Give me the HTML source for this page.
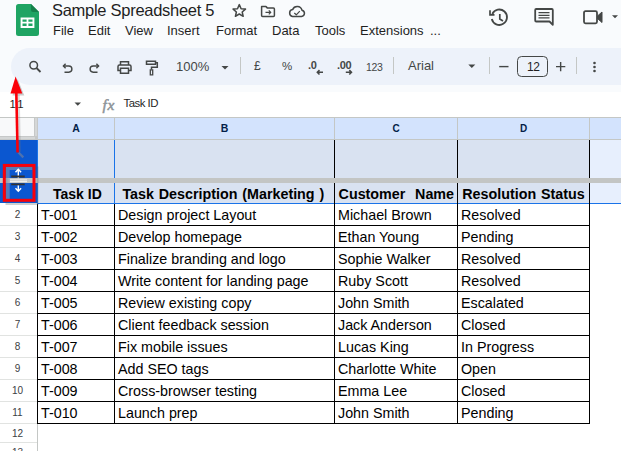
<!DOCTYPE html>
<html><head><meta charset="utf-8">
<style>
*{box-sizing:border-box;margin:0;padding:0}
html,body{width:621px;height:451px;overflow:hidden;background:#f9fbfd;font-family:"Liberation Sans",sans-serif;}
body{position:relative}
.a{position:absolute}
.title{left:52px;top:-1.4px;font-size:16.5px;letter-spacing:-0.28px;color:#1f1f1f;line-height:22px;white-space:nowrap}
.menu{top:23px;font-size:13px;color:#1f1f1f;line-height:16px;white-space:nowrap}
.toolbar{left:11.4px;top:48px;width:640px;height:37px;border-radius:18.5px;background:#edf2fa}
.tb{font-size:13px;color:#444746;line-height:16px;white-space:nowrap}
.sep{top:57px;width:1px;height:17px;background:#c4c7c5}
.white{left:0;top:92px;width:621px;height:359px;background:#fff}
.chl{top:118px;height:21px;color:#041e49;font-weight:bold;font-size:9.5px;text-align:center;line-height:21px}
.rn{left:0;width:35px;color:#3c4043;font-size:10px;text-align:center}
.t{font-size:14.3px;color:#000;line-height:16px;white-space:nowrap}
.hd{font-weight:bold;text-align:center;word-spacing:0.9px}
.ln{background:#000}
</style></head><body>
<!-- header -->
<svg class="a" style="left:16px;top:4px" width="23" height="32" viewBox="0 0 23 32">
<path d="M2.500 0H15L23 8V29.500A2.500 2.500 0 0 1 20.500 32H2.500A2.500 2.500 0 0 1 0 29.500V2.500A2.500 2.500 0 0 1 2.500 0Z" fill="#1fa463"/>
<path d="M15 0L23 8H17A2 2 0 0 1 15 6Z" fill="#16804b"/>
<path d="M4.600 13.500H18.400V23.900H4.600ZM6.500 15.400V17.800H10.600V15.400ZM12.400 15.400V17.800H16.500V15.400ZM6.500 19.600V22H10.600V19.600ZM12.400 19.600V22H16.500V19.600Z" fill="#fff" fill-rule="evenodd"/>
</svg>
<div class="a title">Sample Spreadsheet 5</div>

<div class="a menu" style="left:53px">File</div>
<div class="a menu" style="left:88px">Edit</div>
<div class="a menu" style="left:125px">View</div>
<div class="a menu" style="left:167px">Insert</div>
<div class="a menu" style="left:216px">Format</div>
<div class="a menu" style="left:272px">Data</div>
<div class="a menu" style="left:315px">Tools</div>
<div class="a menu" style="left:360px">Extensions</div>
<div class="a menu" style="left:430px">...</div>
<svg class="a" style="left:230px;top:2px" width="90" height="20" viewBox="0 0 90 20" fill="none" stroke="#444746" stroke-width="1.500" stroke-linejoin="round">
<path transform="translate(0.3,-0.6)" d="M9 3.200L10.800 7.300L15.200 7.700L11.900 10.600L12.900 14.900L9 12.600L5.100 14.900L6.100 10.600L2.800 7.700L7.200 7.300Z"/>
<path d="M31.600 4.600H36L37.500 6.100H43.400Q44.400 6.100 44.400 7.100V13.600Q44.400 14.600 43.400 14.600H32.600Q31.600 14.600 31.600 13.600Z"/>
<path d="M35.500 10.300H40.500M38.800 8.300L40.800 10.300L38.800 12.300" stroke-width="1.200"/>
<path d="M62.500 14.500H71.500A3.200 3.200 0 0 0 72 8.200A5 5 0 0 0 62.600 7.600A3.500 3.500 0 0 0 62.500 14.500Z"/>
<path d="M64.300 11L66.300 12.800L69.800 9.200" stroke-width="1.200"/>
</svg>
<svg class="a" style="left:485px;top:4px" width="136" height="26" viewBox="0 0 136 26" fill="none" stroke="#444746" stroke-width="1.800">
<g transform="translate(0.8,1.5)"><path d="M6.500 8.500A7.700 7.700 0 1 1 6 13.500"/>
<path d="M4.200 4.800V9.300H8.700" stroke-width="1.700"/>
<path d="M14 8.500V13.500L17.200 15.500" stroke-width="1.700"/></g>
<path d="M51.200 5H66.800Q67.800 5 67.800 6V20.800L64.500 17.500H51.200Q50.200 17.500 50.200 16.500V6Q50.200 5 51.200 5Z" stroke-linejoin="round"/>
<path d="M53.500 8.700H64.500M53.500 11.300H64.500M53.500 13.900H64.500" stroke-width="1.300"/>
<path d="M100.500 7.200H110.500Q112 7.200 112 8.700V17.800Q112 19.300 110.500 19.300H100.500Q99 19.300 99 17.800V8.700Q99 7.200 100.500 7.200Z"/>
<path d="M112.500 12L117 8V18.500L112.500 14.500Z" fill="#444746" stroke-width="1"/>
<path d="M127 11.300H133L130 14.300Z" fill="#444746" stroke="none"/>
</svg>
<div class="a toolbar"></div>
<svg class="a" style="left:12px;top:48px" width="609" height="37" viewBox="0 0 609 37" fill="none" stroke="#444746" stroke-width="1.500">
<!-- search -->
<circle cx="21.700" cy="17.200" r="3.800"/><path d="M24.500 20L28.500 24" stroke-width="1.800"/>
<!-- undo -->
<path d="M51.500 18H56.800A2.900 2.900 0 0 1 56.800 24.200H52.500" stroke-width="1.400"/><path d="M53.600 15.800L51.400 18L53.600 20.200" stroke-width="1.400"/>
<!-- redo -->
<path d="M86.500 18H81.200A2.900 2.900 0 0 0 81.200 24.200H85.500" stroke-width="1.400"/><path d="M84.400 15.800L86.600 18L84.400 20.200" stroke-width="1.400"/>
<!-- print -->
<path d="M108.500 17V13.800H116.500V17"/><path d="M108.500 22.500H106V18.500Q106 17 107.500 17H117.500Q119 17 119 18.500V22.500H116.500"/><path d="M108.500 20.300H116.500V25.300H108.500Z"/>
<!-- paint -->
<g transform="translate(-1,0)"><path d="M135.500 13.200H144.500V16.300H135.500Z"/><path d="M144.500 14.700H146.300V19.200H140.500V21.500"/><path d="M139.300 21.800H141.700V26.800H139.300Z" stroke-width="1.300"/></g>
<!-- caret -->
<path d="M209.500 18H216.500L213 21.500Z" fill="#444746" stroke="none"/>
<!-- dec arrows -->
<path d="M305.300 24.300H311M307.500 22.100L305.300 24.300L307.500 26.500" stroke-width="1.500"/>
<path d="M333.800 24.300H339.500M337.300 22.100L339.500 24.300L337.300 26.500" stroke-width="1.500"/>
<!-- font caret -->
<path d="M456.300 16.500H463.300L459.800 20Z" fill="#444746" stroke="none"/>
<!-- minus plus -->
<path d="M487.200 18.600H496.500" stroke-width="1.400"/>
<path d="M544 18.600H553.300M548.650 14V23.300" stroke-width="1.400"/>
<!-- size box -->
<rect x="505.500" y="8.500" width="30" height="20" rx="4" stroke="#444746" stroke-width="1"/>
<!-- dots -->
<g fill="#444746" stroke="none"><circle cx="582.500" cy="15" r="1.300"/><circle cx="582.500" cy="19" r="1.300"/><circle cx="582.500" cy="23" r="1.300"/></g>
</svg>
<div class="a sep" style="left:240px"></div>
<div class="a sep" style="left:393px"></div>
<div class="a sep" style="left:489px"></div>
<div class="a sep" style="left:576px"></div>
<div class="a tb" style="left:176px;top:59px">100%</div>
<div class="a tb" style="left:254px;top:58px;font-size:12px">£</div>
<div class="a tb" style="left:282px;top:58px;font-size:11.500px">%</div>
<div class="a tb" style="left:308px;top:57px;font-size:11px;font-weight:bold;letter-spacing:-0.300px">.0</div>
<div class="a tb" style="left:337px;top:57px;font-size:11px;font-weight:bold;letter-spacing:-0.300px">.00</div>
<div class="a tb" style="left:366px;top:59px;font-size:10.500px;letter-spacing:-0.300px">123</div>
<div class="a tb" style="left:408px;top:58px">Arial</div>
<div class="a tb" style="left:527px;top:59px;color:#1f1f1f;font-size:12px;letter-spacing:-0.500px">12</div>
<div class="a white"></div>
<div class="a" style="left:9.6px;top:97px;font-size:11.4px;letter-spacing:-0.9px;color:#1f1f1f;line-height:14px">1:1</div>
<svg class="a" style="left:74px;top:102px" width="8" height="5"><path d="M0.500 0.500H7L3.750 3.800Z" fill="#444746"/></svg>
<div class="a" style="left:102.5px;top:95.5px;font-size:15.5px;font-style:italic;color:#8d9398;-webkit-text-stroke:0.5px #8d9398;font-family:'Liberation Serif',serif;line-height:18px;letter-spacing:0.6px">fx</div>
<div class="a" style="left:123.500px;top:96px;font-size:11.4px;letter-spacing:-0.5px;color:#1f1f1f;line-height:14px">Task ID</div>
<div class="a" style="left:0;top:117px;width:621px;height:1px;background:#c4c7c5"></div>
<div class="a" style="left:0;top:118px;width:38px;height:22px;background:#f8f9fa"></div>
<div class="a" style="left:34px;top:118px;width:4px;height:22px;background:#c6c8c8"></div>
<div class="a" style="left:35px;top:118px;width:2px;height:18px;background:#d5d7d7"></div>
<div class="a" style="left:0;top:136px;width:38px;height:4px;background:#c6c8c8"></div>
<div class="a" style="left:0;top:137px;width:35px;height:2px;background:#d5d7d7"></div>
<div class="a" style="left:38px;top:118px;width:583px;height:21px;background:#d3e3fd"></div>
<div class="a" style="left:38px;top:139px;width:583px;height:1px;background:#c4c7c5"></div>
<div class="a" style="left:114px;top:118px;width:1px;height:22px;background:#c4c7c5"></div>
<div class="a" style="left:334px;top:118px;width:1px;height:22px;background:#c4c7c5"></div>
<div class="a" style="left:457px;top:118px;width:1px;height:22px;background:#c4c7c5"></div>
<div class="a" style="left:589px;top:118px;width:1px;height:22px;background:#c4c7c5"></div>
<div class="a chl" style="left:38px;width:76px;font-size:10.5px">A</div>
<div class="a chl" style="left:115px;width:219px;font-size:10.5px">B</div>
<div class="a chl" style="left:335px;width:122px;font-size:10px">C</div>
<div class="a chl" style="left:458px;width:131px;font-size:10px">D</div>
<div class="a" style="left:0;top:140px;width:37px;height:63px;background:#0b57d0"></div>
<div class="a" style="left:38px;top:140px;width:552px;height:63px;background:#d9e2f1"></div>
<div class="a" style="left:590px;top:140px;width:31px;height:63px;background:#e7effd"></div>
<div class="a" style="left:37px;top:203px;width:584px;height:1px;background:#1a73e8"></div>
<div class="a" style="left:37px;top:140px;width:1px;height:64px;background:#1a73e8"></div>
<div class="a" style="left:114px;top:140px;width:1px;height:63px;background:#1a73e8"></div>
<div class="a" style="left:37px;top:204px;width:1px;height:247px;background:#c4c7c5"></div>
<div class="a" style="left:0;top:225px;width:37px;height:1px;background:#e1e3e1"></div>
<div class="a" style="left:0;top:247px;width:37px;height:1px;background:#e1e3e1"></div>
<div class="a" style="left:0;top:269px;width:37px;height:1px;background:#e1e3e1"></div>
<div class="a" style="left:0;top:291px;width:37px;height:1px;background:#e1e3e1"></div>
<div class="a" style="left:0;top:313px;width:37px;height:1px;background:#e1e3e1"></div>
<div class="a" style="left:0;top:335px;width:37px;height:1px;background:#e1e3e1"></div>
<div class="a" style="left:0;top:357px;width:37px;height:1px;background:#e1e3e1"></div>
<div class="a" style="left:0;top:379px;width:37px;height:1px;background:#e1e3e1"></div>
<div class="a" style="left:0;top:401px;width:37px;height:1px;background:#e1e3e1"></div>
<div class="a" style="left:0;top:423px;width:37px;height:1px;background:#e1e3e1"></div>
<div class="a" style="left:0;top:442px;width:37px;height:1px;background:#e1e3e1"></div>
<div class="a rn" style="top:204px;height:21px;line-height:22px">2</div>
<div class="a rn" style="top:226px;height:21px;line-height:22px">3</div>
<div class="a rn" style="top:248px;height:21px;line-height:22px">4</div>
<div class="a rn" style="top:270px;height:21px;line-height:22px">5</div>
<div class="a rn" style="top:292px;height:21px;line-height:22px">6</div>
<div class="a rn" style="top:314px;height:21px;line-height:22px">7</div>
<div class="a rn" style="top:336px;height:21px;line-height:22px">8</div>
<div class="a rn" style="top:358px;height:21px;line-height:22px">9</div>
<div class="a rn" style="top:380px;height:21px;line-height:22px">10</div>
<div class="a rn" style="top:402px;height:21px;line-height:22px">11</div>
<div class="a rn" style="top:424px;height:18px;line-height:19px">12</div>
<div class="a rn" style="top:443px;height:18px;line-height:19px">13</div>
<div class="a ln" style="left:334px;top:140px;width:1px;height:284px"></div>
<div class="a ln" style="left:457px;top:140px;width:1px;height:284px"></div>
<div class="a ln" style="left:589px;top:140px;width:1px;height:284px"></div>
<div class="a ln" style="left:114px;top:204px;width:1px;height:220px"></div>
<div class="a ln" style="left:37px;top:204px;width:1px;height:220px"></div>
<div class="a ln" style="left:38px;top:225px;width:552px;height:1px"></div>
<div class="a ln" style="left:38px;top:247px;width:552px;height:1px"></div>
<div class="a ln" style="left:38px;top:269px;width:552px;height:1px"></div>
<div class="a ln" style="left:38px;top:291px;width:552px;height:1px"></div>
<div class="a ln" style="left:38px;top:313px;width:552px;height:1px"></div>
<div class="a ln" style="left:38px;top:335px;width:552px;height:1px"></div>
<div class="a ln" style="left:38px;top:357px;width:552px;height:1px"></div>
<div class="a ln" style="left:38px;top:379px;width:552px;height:1px"></div>
<div class="a ln" style="left:38px;top:401px;width:552px;height:1px"></div>
<div class="a ln" style="left:38px;top:423px;width:552px;height:1px"></div>
<div class="a" style="left:0;top:178px;width:621px;height:5px;background:#c3c5c4"></div>
<div class="a t hd" style="left:39.4px;width:76px;top:186px;font-size:14px;word-spacing:0;">Task ID</div>
<div class="a t hd" style="left:113.8px;width:219px;top:186px;">Task Description (Marketing )</div>
<div class="a t hd" style="left:335.3px;width:122px;top:186px;">Customer&nbsp; Name</div>
<div class="a t hd" style="left:458px;width:131px;top:186px;">Resolution Status</div>
<div class="a t" style="left:41px;top:207px">T-001</div>
<div class="a t" style="left:118px;top:207px">Design project Layout</div>
<div class="a t" style="left:338px;top:207px">Michael Brown</div>
<div class="a t" style="left:461px;top:207px">Resolved</div>
<div class="a t" style="left:41px;top:229px">T-002</div>
<div class="a t" style="left:118px;top:229px">Develop homepage</div>
<div class="a t" style="left:338px;top:229px">Ethan Young</div>
<div class="a t" style="left:461px;top:229px">Pending</div>
<div class="a t" style="left:41px;top:251px">T-003</div>
<div class="a t" style="left:118px;top:251px">Finalize branding and logo</div>
<div class="a t" style="left:338px;top:251px">Sophie Walker</div>
<div class="a t" style="left:461px;top:251px">Resolved</div>
<div class="a t" style="left:41px;top:273px">T-004</div>
<div class="a t" style="left:118px;top:273px">Write content for landing page</div>
<div class="a t" style="left:338px;top:273px">Ruby Scott</div>
<div class="a t" style="left:461px;top:273px">Resolved</div>
<div class="a t" style="left:41px;top:295px">T-005</div>
<div class="a t" style="left:118px;top:295px">Review existing copy</div>
<div class="a t" style="left:338px;top:295px">John Smith</div>
<div class="a t" style="left:461px;top:295px">Escalated</div>
<div class="a t" style="left:41px;top:317px">T-006</div>
<div class="a t" style="left:118px;top:317px">Client feedback session</div>
<div class="a t" style="left:338px;top:317px">Jack Anderson</div>
<div class="a t" style="left:461px;top:317px">Closed</div>
<div class="a t" style="left:41px;top:339px">T-007</div>
<div class="a t" style="left:118px;top:339px">Fix mobile issues</div>
<div class="a t" style="left:338px;top:339px">Lucas King</div>
<div class="a t" style="left:461px;top:339px">In Progress</div>
<div class="a t" style="left:41px;top:361px">T-008</div>
<div class="a t" style="left:118px;top:361px">Add SEO tags</div>
<div class="a t" style="left:338px;top:361px">Charlotte White</div>
<div class="a t" style="left:461px;top:361px">Open</div>
<div class="a t" style="left:41px;top:383px">T-009</div>
<div class="a t" style="left:118px;top:383px">Cross-browser testing</div>
<div class="a t" style="left:338px;top:383px">Emma Lee</div>
<div class="a t" style="left:461px;top:383px">Closed</div>
<div class="a t" style="left:41px;top:405px">T-010</div>
<div class="a t" style="left:118px;top:405px">Launch prep</div>
<div class="a t" style="left:338px;top:405px">John Smith</div>
<div class="a t" style="left:461px;top:405px">Pending</div>
<svg class="a" style="left:0;top:70px" width="60" height="140" viewBox="0 70 60 140">
<!-- box shadow -->
<rect x="6.500" y="167.500" width="31" height="36.500" fill="none" stroke="#555" stroke-width="2" opacity=".28"/>
<!-- inner tint -->
<path d="M6 167H32.400V170H9.700V199H6Z" fill="#8c9bb5" opacity=".55"/>
<!-- cursor -->
<g stroke="#fff" stroke-width="1.400" fill="none">
<path d="M18.300 169V178.300M15.500 172.300L18.300 169.300L21.100 172.300"/>
<path d="M18.300 185.300V191.300M15.500 188.300L18.300 191.300L21.100 188.300"/>
</g>
<path d="M11.200 176.500H24.700M11.200 184.400H24.700" stroke="#333" stroke-width="1.900"/>
<rect x="10" y="179.500" width="17" height="0.800" fill="#fff"/><rect x="10" y="181.300" width="17" height="0.800" fill="#fff"/>
<!-- arrow shadow -->
<path d="M18.500 152.500L23.300 157.300" stroke="#5f78a8" stroke-width="2.400" opacity=".8"/>
<path d="M18.700 95L19.900 152" stroke="#777" stroke-width="2" opacity=".25"/>
<path d="M17.600 79L24.300 95.500H12.500Z" fill="#666" opacity=".35"/>
<rect x="4.300" y="165.400" width="29.700" height="34.900" fill="none" stroke="#fa0008" stroke-width="3"/>
<path d="M16.300 92L17.600 152.500" stroke="#fa0008" stroke-width="2.600"/>
<path d="M15.600 76.500L22.300 93.500H10.500Z" fill="#fa0008"/>
</svg>
</body></html>
